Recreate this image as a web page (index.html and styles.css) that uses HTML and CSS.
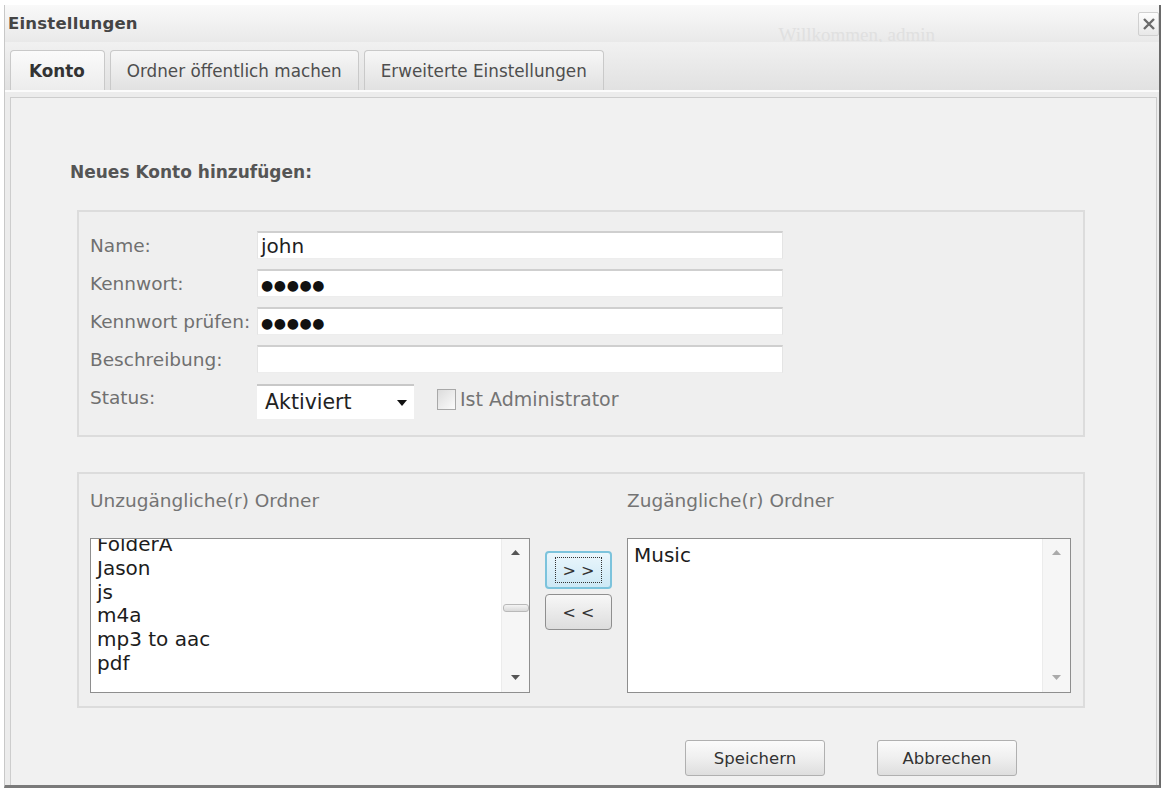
FILE: index.html
```html
<!DOCTYPE html>
<html lang="de">
<head>
<meta charset="utf-8">
<title>Einstellungen</title>
<link rel="stylesheet" href="styles.css">
</head>
<body>
<div class="dialog">
  <div class="titlebar">
    <span class="title">Einstellungen</span>
    <span class="ghost">Willkommen, admin</span>
    <button class="close" aria-label="Schließen">
      <svg width="14" height="14" viewBox="0 0 14 14"><path d="M2 2 L12 12 M12 2 L2 12" stroke="#6a6a6a" stroke-width="2.4" fill="none"/></svg>
    </button>
  </div>
  <div class="tabbar">
    <div class="tabs">
      <div class="tab active">Konto</div>
      <div class="tab">Ordner öffentlich machen</div>
      <div class="tab">Erweiterte Einstellungen</div>
    </div>
    <div class="tabstrip"></div>
  </div>
  <div class="panel">
    <h2 class="section-title">Neues Konto hinzufügen:</h2>
    <div class="fieldset account">
      <div class="form-grid">
        <span class="label">Name:</span>
        <div class="field"><span class="value">john</span></div>
        <span class="label">Kennwort:</span>
        <div class="field"><span class="dots">●●●●●</span></div>
        <span class="label">Kennwort prüfen:</span>
        <div class="field"><span class="dots">●●●●●</span></div>
        <span class="label">Beschreibung:</span>
        <div class="field"></div>
        <span class="label">Status:</span>
        <div class="status-row">
          <div class="select">
            <span class="select-text">Aktiviert</span>
            <svg class="select-arrow" width="10" height="6" viewBox="0 0 10 6"><path d="M0 0 H10 L5 6 Z" fill="#111"/></svg>
          </div>
          <span class="checkbox"></span>
          <span class="check-label">Ist Administrator</span>
        </div>
      </div>
    </div>
    <div class="fieldset folders">
      <div class="folder-grid">
        <span class="folder-label">Unzugängliche(r) Ordner</span>
        <span class="folder-label right">Zugängliche(r) Ordner</span>
        <div class="listbox">
          <div class="list scrolled">
            <div class="item">FolderA</div>
            <div class="item">Jason</div>
            <div class="item">js</div>
            <div class="item">m4a</div>
            <div class="item">mp3 to aac</div>
            <div class="item">pdf</div>
          </div>
          <div class="scrollbar">
            <svg width="9" height="5" viewBox="0 0 9 5"><path d="M0 5 H9 L4.5 0 Z" fill="#555"/></svg>
            <span class="thumb"></span>
            <svg width="9" height="5" viewBox="0 0 9 5"><path d="M0 0 H9 L4.5 5 Z" fill="#555"/></svg>
          </div>
        </div>
        <div class="move-buttons">
          <button class="move focused"><span class="focus-ring">&gt; &gt;</span></button>
          <button class="move">&lt; &lt;</button>
        </div>
        <div class="listbox">
          <div class="list">
            <div class="item">Music</div>
          </div>
          <div class="scrollbar disabled">
            <svg width="9" height="5" viewBox="0 0 9 5"><path d="M0 5 H9 L4.5 0 Z" fill="#aaa"/></svg>
            <svg width="9" height="5" viewBox="0 0 9 5"><path d="M0 0 H9 L4.5 5 Z" fill="#aaa"/></svg>
          </div>
        </div>
      </div>
    </div>
    <div class="actions">
      <button class="btn">Speichern</button>
      <button class="btn">Abbrechen</button>
    </div>
  </div>
</div>
</body>
</html>
```
FILE: styles.css
```css
* { box-sizing: border-box; }
html, body { margin: 0; padding: 0; background: #ffffff; }
body {
  font-family: "DejaVu Sans", "Liberation Sans", sans-serif;
  width: 1168px;
  height: 790px;
  overflow: hidden;
}
button { font-family: inherit; }

.dialog {
  margin: 5px 0 0 4px;
  width: 1157px;
  height: 783px;
  display: flex;
  flex-direction: column;
  border-left: 1px solid #c8c8c8;
  border-right: 2px solid #6a6a6a;
  border-bottom: 3px solid #7a7a7a;
  background: #ececec;
}

/* title bar */
.titlebar {
  height: 37px;
  display: flex;
  align-items: center;
  padding-left: 3px;
  background: linear-gradient(#f9f9f9, #e9e9e9);
}
.title {
  font-weight: bold;
  font-size: 16.5px;
  color: #454545;
  letter-spacing: 0.2px;
}
.ghost {
  margin-left: auto;
  margin-right: 203px;
  align-self: flex-end;
  margin-bottom: -2px;
  font-family: "Liberation Serif", serif;
  font-size: 19px;
  color: #e0e0e0;
  line-height: 18px;
}
.close {
  align-self: flex-start;
  margin-top: 7px;
  width: 21px;
  height: 24px;
  padding: 0;
  display: flex;
  align-items: center;
  justify-content: center;
  border: 1px solid #d0d0d0;
  border-radius: 2px;
  background: linear-gradient(#fdfdfd, #e8e8e8);
}

/* tabs */
.tabbar {
  height: 55px;
  display: flex;
  flex-direction: column;
  background: linear-gradient(#f1f1f1, #dfdfdf);
}
.tabs {
  display: flex;
  gap: 5px;
  padding: 8px 0 0 5px;
  height: 48px;
}
.tab {
  height: 40px;
  padding: 0 16px;
  display: flex;
  align-items: center;
  font-size: 16.8px;
  color: #4e4e4e;
  border: 1px solid #c9c9c9;
  border-bottom: none;
  border-radius: 4px 4px 0 0;
  background: linear-gradient(#f7f7f7, #e1e1e1);
}
.tab.active {
  font-weight: bold;
  color: #333;
  padding: 0 19px 0 18px;
  background: linear-gradient(#fbfbfb, #ececec);
}
.tabstrip {
  flex: 1;
  border-top: 2px solid #fbfbfb;
  background: #ececec;
}

/* panel */
.panel {
  flex: 1;
  margin: 0 2px 0 5px;
  border: 1px solid #cdcdcd;
  border-bottom: none;
  background: #f1f1f1;
  display: flex;
  flex-direction: column;
}
.section-title {
  margin: 64px 0 0 59px;
  font-size: 17px;
  line-height: 20px;
  font-weight: bold;
  color: #555;
}
.fieldset {
  margin-left: 66px;
  width: 1008px;
  border: 2px solid #dcdcdc;
  background: #efefef;
}
.fieldset.account {
  margin-top: 28px;
  height: 227px;
  padding: 19px 0 0 11px;
}
.form-grid {
  display: grid;
  grid-template-columns: 167px 526px;
  grid-auto-rows: 28px;
  row-gap: 10px;
  align-items: center;
}
.label {
  font-size: 18.5px;
  color: #707070;
}
.field {
  height: 28px;
  background: #ffffff;
  border-top: 2px solid #cfcfcf;
  border-left: 1px solid #e4e4e4;
  border-right: 1px solid #e4e4e4;
  border-bottom: 1px solid #ededed;
  display: flex;
  align-items: center;
  padding-left: 3px;
}
.value {
  font-size: 20px;
  color: #1e1e1e;
}
.dots {
  font-size: 14px;
  letter-spacing: 0.6px;
  color: #111;
  padding-top: 2px;
}
.status-row {
  display: flex;
  align-items: center;
  height: 28px;
}
.select {
  width: 157px;
  height: 35px;
  margin-top: 8px;
  background: #ffffff;
  border-top: 2px solid #c8c8c8;
  display: flex;
  align-items: center;
  padding: 0 7px 0 8px;
}
.select-text {
  font-size: 20.5px;
  color: #222;
  flex: 1;
}
.select-arrow { margin-top: 2px; }
.checkbox {
  width: 19px;
  height: 21px;
  margin-left: 23px;
  margin-top: 4px;
  border: 1px solid #a8a8a8;
  background: linear-gradient(135deg, #dcdcdc, #fbfbfb);
}
.check-label {
  margin-left: 4px;
  margin-top: 4px;
  font-size: 19px;
  color: #747474;
}

.fieldset.folders {
  margin-top: 35px;
  height: 236px;
  padding: 17px 0 0 11px;
}
.folder-grid {
  display: grid;
  grid-template-columns: 440px 67px 444px;
  grid-template-rows: 20px 155px;
  column-gap: 15px;
  row-gap: 27px;
}
.folder-label {
  font-size: 18.5px;
  line-height: 20px;
  color: #747474;
}
.folder-label.right { grid-column: 3; }
.listbox {
  border: 1px solid #8e8e8e;
  background: #ffffff;
  display: flex;
  overflow: hidden;
}
.list {
  flex: 1;
  padding: 5px 0 0 6px;
}
.list.scrolled { padding-top: 0; margin-top: -6px; }
.item {
  font-size: 20px;
  line-height: 23.8px;
  color: #1c1c1c;
}
.scrollbar {
  width: 28px;
  display: flex;
  flex-direction: column;
  align-items: center;
  justify-content: space-between;
  padding: 11px 0 12px;
  border-left: 1px solid #ececec;
  background: #f6f6f6;
}
.thumb {
  width: 26px;
  height: 8px;
  margin-bottom: 14px;
  border: 1px solid #b9b9b9;
  border-radius: 3px;
  background: linear-gradient(#f4f4f4, #d9d9d9);
}
.move-buttons {
  display: flex;
  flex-direction: column;
  gap: 5px;
  padding-top: 13px;
}
.move {
  width: 67px;
  height: 36px;
  padding: 0;
  font-size: 16px;
  color: #333;
  border: 1px solid #8f8f8f;
  border-radius: 4px;
  background: linear-gradient(#f7f7f7, #dddddd);
  display: flex;
  align-items: center;
  justify-content: center;
}
.move.focused {
  height: 38px;
  border: 2px solid #7cc3dc;
  background: linear-gradient(#eaf6fc, #cde8f5);
}
.focus-ring {
  width: 47px;
  height: 26px;
  border: 1px dotted #333;
  display: flex;
  align-items: center;
  justify-content: center;
}

.actions {
  margin-top: 32px;
  padding-left: 674px;
  display: flex;
  gap: 52px;
}
.btn {
  width: 140px;
  height: 36px;
  font-size: 16.5px;
  color: #333;
  border: 1px solid #b0b0b0;
  border-radius: 3px;
  background: linear-gradient(#fbfbfb 0%, #efefef 50%, #dedede 100%);
}
```
